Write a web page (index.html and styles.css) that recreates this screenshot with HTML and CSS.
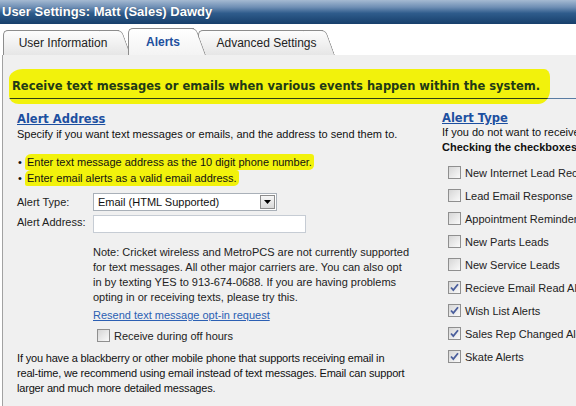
FILE: index.html
```html
<!DOCTYPE html>
<html>
<head>
<meta charset="utf-8">
<link rel="stylesheet" href="styles.css">
</head>
<body>
<div class="app">
  <header class="titlebar">User Settings: Matt (Sales) Dawdy</header>
  <nav class="tabs">
    <div class="tab tab-user"><span class="tab-label">User Information</span></div>
    <div class="tab tab-alerts active"><span class="tab-label">Alerts</span></div>
    <div class="tab tab-adv"><span class="tab-label">Advanced Settings</span></div>
  </nav>
  <main class="panel">
    <div class="banner"><mark class="banner-hl">Receive text messages or emails when various events happen within the system.</mark></div>
    <div class="cols">
      <section class="left">
        <h2 class="sec-title">Alert Address</h2>
        <p class="intro">Specify if you want text messages or emails, and the address to send them to.</p>
        <ul class="bullets">
          <li><span class="dot">•</span> <mark class="hl hl-1">Enter text message address as the 10 digit phone number.</mark></li>
          <li><span class="dot">•</span> <mark class="hl hl-2">Enter email alerts as a valid email address.</mark></li>
        </ul>
        <div class="form">
          <div class="row">
            <span class="lbl">Alert Type:</span>
            <div class="select">
              <span class="select-val">Email (HTML Supported)</span>
              <span class="select-btn"><svg width="7" height="4" viewBox="0 0 7 4"><path d="M0 0h7L3.5 4z" fill="#000"/></svg></span>
            </div>
          </div>
          <div class="row">
            <span class="lbl">Alert Address:</span>
            <div class="input"></div>
          </div>
          <div class="indent">
            <p class="note">Note: Cricket wireless and MetroPCS are not currently supported for text messages. All other major carriers are. You can also opt in by texting YES to 913-674-0688. If you are having problems opting in or receiving texts, please try this.</p>
            <a class="link">Resend text message opt-in request</a>
            <div class="cb-row off-hours"><span class="cb"></span><span>Receive during off hours</span></div>
          </div>
        </div>
        <p class="tip">If you have a blackberry or other mobile phone that supports receiving email in <span class="nowrap">real-time,</span> we recommend using email instead of text messages. Email can support larger and much more detailed messages.</p>
      </section>
      <section class="right">
        <h2 class="sec-title">Alert Type</h2>
        <p class="r-line">If you do not want to receive certain alerts, uncheck them below.</p>
        <p class="r-line r-bold">Checking the checkboxes will enable the alert.</p>
        <div class="checks">
          <div class="cb-row"><span class="cb"></span><span>New Internet Lead Received</span></div>
          <div class="cb-row"><span class="cb"></span><span>Lead Email Response Received</span></div>
          <div class="cb-row"><span class="cb"></span><span>Appointment Reminder</span></div>
          <div class="cb-row"><span class="cb"></span><span>New Parts Leads</span></div>
          <div class="cb-row"><span class="cb"></span><span>New Service Leads</span></div>
          <div class="cb-row"><span class="cb checked"><svg width="9" height="9" viewBox="0 0 9 9"><path d="M1 4.5 L3.3 7 L8 1.2" fill="none" stroke="#4a5e9c" stroke-width="1.8"/></svg></span><span>Recieve Email Read Alerts</span></div>
          <div class="cb-row"><span class="cb checked"><svg width="9" height="9" viewBox="0 0 9 9"><path d="M1 4.5 L3.3 7 L8 1.2" fill="none" stroke="#4a5e9c" stroke-width="1.8"/></svg></span><span>Wish List Alerts</span></div>
          <div class="cb-row"><span class="cb checked"><svg width="9" height="9" viewBox="0 0 9 9"><path d="M1 4.5 L3.3 7 L8 1.2" fill="none" stroke="#4a5e9c" stroke-width="1.8"/></svg></span><span>Sales Rep Changed Alerts</span></div>
          <div class="cb-row"><span class="cb checked"><svg width="9" height="9" viewBox="0 0 9 9"><path d="M1 4.5 L3.3 7 L8 1.2" fill="none" stroke="#4a5e9c" stroke-width="1.8"/></svg></span><span>Skate Alerts</span></div>
        </div>
      </section>
    </div>
  </main>
</div>
</body>
</html>
```

FILE: styles.css
```css
html, body {
  margin: 0;
  padding: 0;
  background: #ffffff;
  overflow: hidden;
}
body {
  font-family: "Liberation Sans", Arial, sans-serif;
  font-size: 11px;
  color: #111;
}
.app {
  width: 576px;
  height: 406px;
  display: flex;
  flex-direction: column;
  overflow: hidden;
}
.titlebar {
  height: 24px;
  box-sizing: border-box;
  padding: 4px 0 0 2px;
  font: bold 13px "Liberation Sans", Arial, sans-serif;
  color: #fff;
  text-shadow: 0 0 1px rgba(0,0,0,0.3);
  background: linear-gradient(to bottom, #a5bad2 0%, #6e8eb4 30%, #2f5c8c 55%, #173f6b 100%);
  white-space: nowrap;
}

/* tabs */
.tabs {
  height: 31px;
  display: flex;
  align-items: flex-end;
  padding-left: 3px;
  background: #fff;
}
.tab {
  position: relative;
  height: 25px;
  display: flex;
  align-items: center;
  justify-content: center;
  box-sizing: border-box;
  padding-right: 8px;
  padding-top: 1px;
  font: 12px "Liberation Sans", Arial, sans-serif;
  color: #222;
  z-index: 1;
}
.tab::before {
  content: "";
  position: absolute;
  left: 0; top: 0; bottom: 0; right: 12px;
  border: 1px solid #8d8d8d;
  border-right: none;
  border-bottom: none;
  border-radius: 5px 0 0 0;
  background: linear-gradient(to bottom, #fdfdfd, #e6e6e6);
  z-index: -1;
}
.tab::after {
  content: "";
  position: absolute;
  top: 0; bottom: 0; right: 0;
  width: 22px;
  border-top: 1px solid #8d8d8d;
  border-right: 1px solid #8d8d8d;
  border-radius: 0 5px 0 0;
  background: linear-gradient(to bottom, #fdfdfd, #e6e6e6);
  transform: skewX(20deg);
  transform-origin: bottom right;
  z-index: -1;
}
.tab-label { position: relative; }
.tab-user { width: 128px; }
.tab-alerts {
  width: 78px;
  height: 27px;
  margin-left: -3px;
  z-index: 3;
  font-weight: bold;
  color: #1d4f9e;
}
.tab-alerts::before, .tab-alerts::after {
  background: linear-gradient(to bottom, #ffffff, #f3f3f3);
}
.tab-adv { width: 137px; margin-left: -8px; z-index: 0; padding-left: 8px; }

/* panel */
.panel {
  flex: 1;
  background: #f0f0f0;
  border-left: 1px solid #a2a2a2;
  margin-left: 2px;
  padding-top: 14px;
}
.banner {
  margin-left: 7px;
  border-bottom: 1px solid #5a7ca4;
  height: 29px;
}
.banner-hl {
  display: inline-block;
  width: 541px;
  height: 35px;
  box-sizing: border-box;
  padding: 10px 0 0 3px;
  margin-left: -1px;
  font: bold 11.5px "DejaVu Sans", Verdana, sans-serif;
  color: #223a16;
  white-space: nowrap;
  border-radius: 14px 6px 12px 10px / 10px 8px 14px 8px;
  background:
    linear-gradient(to bottom, transparent 29px, #2f3f14 29px, #2f3f14 30px, transparent 30px),
    #f2f20c;
}

.cols {
  display: flex;
  margin-top: 13px;
}
.left {
  width: 425px;
  padding-left: 14px;
  box-sizing: border-box;
}
.right {
  padding-left: 14px;
  white-space: nowrap;
  overflow: hidden;
  flex: 1;
  margin-top: -1px;
}
.sec-title {
  margin: 0;
  font: bold 11.5px "DejaVu Sans", Verdana, sans-serif;
  color: #1c4fa0;
  text-decoration: underline;
  line-height: 14px;
}
.intro { margin: 1px 0 0; line-height: 14px; }
.bullets {
  list-style: none;
  margin: 13px 0 0;
  padding: 0;
  line-height: 16px;
}
.bullets .dot { padding-left: 1px; }
.hl {
  background: #f2f20c;
  color: #111;
  padding: 2px 2px;
  border-radius: 6px 3px 5px 2px;
}
.form { margin-top: 6px; }
.row {
  display: flex;
  align-items: center;
  height: 20px;
}
.lbl { width: 76px; color: #222; }
.select {
  width: 184px;
  height: 18px;
  box-sizing: border-box;
  border: 1px solid #a9b0b8;
  background: #fff;
  display: flex;
  align-items: center;
  justify-content: space-between;
  padding: 0 1px 0 4px;
}
.select-btn {
  width: 15px;
  height: 14px;
  box-sizing: border-box;
  border: 1px solid #8c8c8c;
  background: linear-gradient(to bottom, #f7f7f7, #d9d9d9);
  display: flex;
  align-items: center;
  justify-content: center;
}
.input {
  width: 213px;
  height: 18px;
  box-sizing: border-box;
  border: 1px solid #c6ccd4;
  background: #fff;
  margin-top: 4px;
}
.indent { padding-left: 76px; margin-top: 13px; }
.note { margin: 0; line-height: 15px; color: #222; width: 318px; }
.link {
  display: block;
  margin-top: 3px;
  color: #2b5fb3;
  text-decoration: underline;
  line-height: 15px;
}
.cb-row {
  display: flex;
  align-items: center;
  height: 23px;
  gap: 4px;
  color: #222;
}
.off-hours { padding-left: 4px; margin-top: 1px; }
.cb {
  width: 13px;
  height: 13px;
  box-sizing: border-box;
  border: 1px solid #8f8f8f;
  background: linear-gradient(135deg, #d6d6d6, #fafafa);
  display: inline-flex;
  align-items: center;
  justify-content: center;
  flex: none;
}
.tip {
  margin: 4px 0 0;
  line-height: 15px;
  color: #111;
  width: 400px;
  letter-spacing: -0.18px;
}
.nowrap { white-space: nowrap; }

.r-line { margin: 0; line-height: 15px; }
.right .sec-title { margin-bottom: 0; }
.r-bold { font-weight: bold; }
.checks { margin-top: 6px; padding-left: 6px; }
```
